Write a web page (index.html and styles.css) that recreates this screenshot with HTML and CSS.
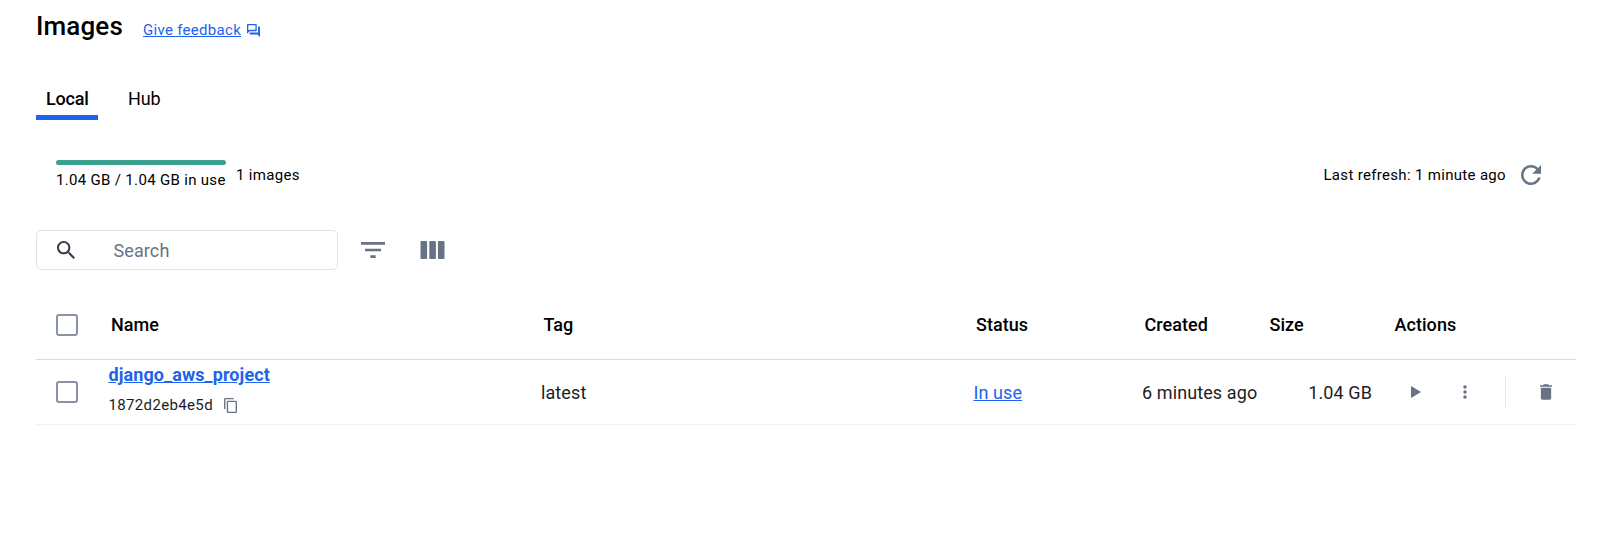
FILE: index.html
```html
<!DOCTYPE html>
<html lang="en">
<head>
<meta charset="utf-8">
<title>Images</title>
<link rel="stylesheet" href="styles.css">
</head>
<body>
<main class="page">
  <header class="heading">
    <h1 class="title">Images</h1>
    <a class="feedback" href="#"><span class="feedback-text">Give feedback</span><svg class="icon-feedback" viewBox="2 2 20 20"><path d="M15 4v7H5.17L4 12.17V4h11m1-2H3c-.55 0-1 .45-1 1v14l4-4h10c.55 0 1-.45 1-1V3c0-.55-.45-1-1-1zm5 4h-2v9H6v2c0 .55.45 1 1 1h11l4 4V7c0-.55-.45-1-1-1z"/></svg></a>
  </header>
  <nav class="tabs">
    <a class="tab tab-active">Local</a>
    <a class="tab">Hub</a>
  </nav>
  <section class="summary">
    <div class="usage"><div class="usage-bar"></div><div class="usage-text">1.04 GB / 1.04 GB in use</div></div>
    <div class="count">1 images</div>
    <div class="refresh">Last refresh: 1 minute ago</div>
    <svg class="icon-refresh" viewBox="4 4 16 16"><path d="M17.65 6.35C16.2 4.9 14.21 4 12 4c-4.42 0-7.99 3.58-7.99 8s3.57 8 7.99 8c3.73 0 6.84-2.55 7.73-6h-2.08c-.82 2.33-3.04 4-5.65 4-3.31 0-6-2.69-6-6s2.69-6 6-6c1.66 0 3.14.69 4.22 1.78L13 11h7V4l-2.35 2.35z"/></svg>
  </section>
  <section class="toolbar">
    <div class="search">
      <svg class="icon-search" viewBox="3 3 17.5 17.5"><path d="M15.5 14h-.79l-.28-.27C15.41 12.59 16 11.11 16 9.5 16 5.91 13.09 3 9.5 3S3 5.91 3 9.5 5.91 16 9.5 16c1.61 0 3.09-.59 4.23-1.57l.27.28v.79l5 4.99L20.49 19l-4.99-5zm-6 0C7.01 14 5 11.99 5 9.5S7.01 5 9.5 5 14 7.01 14 9.5 11.99 14 9.5 14z"/></svg>
      <span class="search-text">Search</span>
    </div>
    <svg class="icon-filter" viewBox="3 6 18 12"><path d="M10 18h4v-2h-4v2zM3 6v2h18V6H3zm3 7h12v-2H6v2z"/></svg>
    <svg class="icon-columns" viewBox="0 0 24 18"><rect width="6.6" height="18" rx="1"/><rect x="8.8" width="6.6" height="18" rx="1"/><rect x="17.4" width="6.6" height="18" rx="1"/></svg>
  </section>
  <section class="table">
    <div class="row row-head">
      <span class="checkbox"></span>
      <span class="cell">Name</span>
      <span class="cell">Tag</span>
      <span class="cell">Status</span>
      <span class="cell">Created</span>
      <span class="cell">Size</span>
      <span class="cell">Actions</span>
    </div>
    <div class="row row-body">
      <span class="checkbox"></span>
      <div class="name">
        <a class="name-link" href="#">django_aws_project</a>
        <div class="hash"><span>1872d2eb4e5d</span><svg class="icon-copy" viewBox="2 1 19 22"><path d="M16 1H4c-1.1 0-2 .9-2 2v14h2V3h12V1zm3 4H8c-1.1 0-2 .9-2 2v14c0 1.1.9 2 2 2h11c1.1 0 2-.9 2-2V7c0-1.1-.9-2-2-2zm0 16H8V7h11v14z"/></svg></div>
      </div>
      <span class="cell">latest</span>
      <span class="cell"><a class="status-link" href="#">In use</a></span>
      <span class="cell created">6 minutes ago</span>
      <span class="cell size">1.04 GB</span>
      <div class="actions">
        <svg class="icon-play" viewBox="0 0 10 12"><path d="M0 0l10 6-10 6z"/></svg>
        <svg class="icon-more" viewBox="0 0 4 14"><circle cx="2" cy="2" r="1.75"/><circle cx="2" cy="7" r="1.75"/><circle cx="2" cy="12" r="1.75"/></svg>
        <span class="divider"></span>
        <svg class="icon-trash" viewBox="5 3 14 18"><path d="M6 19c0 1.1.9 2 2 2h8c1.1 0 2-.9 2-2V7H6v12zM19 4h-3.5l-1-1h-5l-1 1H5v2h14V4z"/></svg>
      </div>
    </div>
  </section>
</main>
</body>
</html>
```
FILE: styles.css
```css
* { box-sizing: border-box; }
body { margin: 0; background: #fff; color: #000; font-family: Roboto, sans-serif; font-size: 18px; }
svg { display: block; flex: none; fill: #677285; }
a { color: #1d63ed; }
.page { padding: 11px 39px 0 36px; }
.heading { display: flex; height: 36px; }
.title { margin: 0; font-size: 26px; font-weight: 500; line-height: 30px; letter-spacing: 0.15px; width: 107px; }
.feedback { display: flex; align-items: center; height: 20px; margin-top: 9px; font-size: 15px; letter-spacing: 0.3px; gap: 6px; text-decoration: none; }
.feedback-text { line-height: 20px; text-decoration: underline; }
.icon-feedback { width: 13px; height: 13px; fill: #1d63ed; }
.tabs { display: flex; gap: 20px; margin-top: 32px; }
.tab { height: 41px; padding: 8px 10px 0; line-height: 24px; color: #000; letter-spacing: -0.1px; }
.tab-active { width: 62px; font-weight: 500; letter-spacing: -0.2px; border-bottom: 5px solid #1d63ed; }
.summary { display: flex; height: 70px; padding: 0 35px 0 20px; margin-top: 40px; font-size: 15px; letter-spacing: 0.32px; }
.usage { width: 170px; margin-right: 10px; white-space: nowrap; }
.usage-bar { height: 5px; border-radius: 3px; background: #3ba08d; }
.usage-text { line-height: 20px; margin-top: 5px; }
.count, .refresh { line-height: 20px; margin-top: 5px; }
.refresh { margin-left: auto; margin-right: 15px; }
.icon-refresh { width: 20px; height: 20px; margin-top: 5px; }
.toolbar { display: flex; align-items: center; height: 40px; }
.search { display: flex; align-items: center; width: 302px; height: 40px; padding-left: 20px; border: 1px solid #e1e2e6; border-radius: 5px; margin-right: 23px; }
.icon-search { width: 18px; height: 18px; fill: #393f49; }
.search-text { color: #677285; margin-left: 38.5px; padding-top: 1px; letter-spacing: 0.1px; }
.icon-filter { width: 24px; height: 16px; }
.icon-columns { width: 25px; height: 18px; margin-left: 35px; }
.row { display: grid; grid-template-columns: 52.5px 432.5px 432.5px 168.5px 125px 125px 1fr; padding-left: 20px; align-items: center; }
.row-head { height: 70px; border-bottom: 1px solid #d9dadd; font-weight: 500; letter-spacing: 0.05px; }
.row-head .cell { padding-left: 2.5px; }
.row-body { height: 65px; border-bottom: 1px solid #f1f2f4; color: #1c1d1f; letter-spacing: 0.1px; }
.row-body > .cell { padding-top: 1px; }
.table { margin-top: 20px; }
.checkbox { width: 22px; height: 22px; border: 2px solid #8993a5; border-radius: 3px; }
.name { height: 64px; padding-top: 3px; }
.name-link { display: block; height: 26px; line-height: 24px; font-weight: 700; letter-spacing: 0.1px; }
.hash { display: flex; align-items: center; height: 20px; margin-top: 6px; font-size: 15px; letter-spacing: 0.35px; gap: 11.5px; }
.icon-copy { width: 13px; height: 15px; }
.row-body .size { padding-right: 20px; text-align: right; }
.created { white-space: nowrap; }
.actions { display: flex; align-items: center; padding-left: 19px; }
.icon-play { width: 10px; height: 12px; }
.icon-more { width: 4px; height: 14px; margin-left: 42px; }
.divider { width: 1px; height: 30px; margin-left: 38px; background: #e6e8ec; }
.icon-trash { width: 12px; height: 16px; margin-left: 34px; }
```
